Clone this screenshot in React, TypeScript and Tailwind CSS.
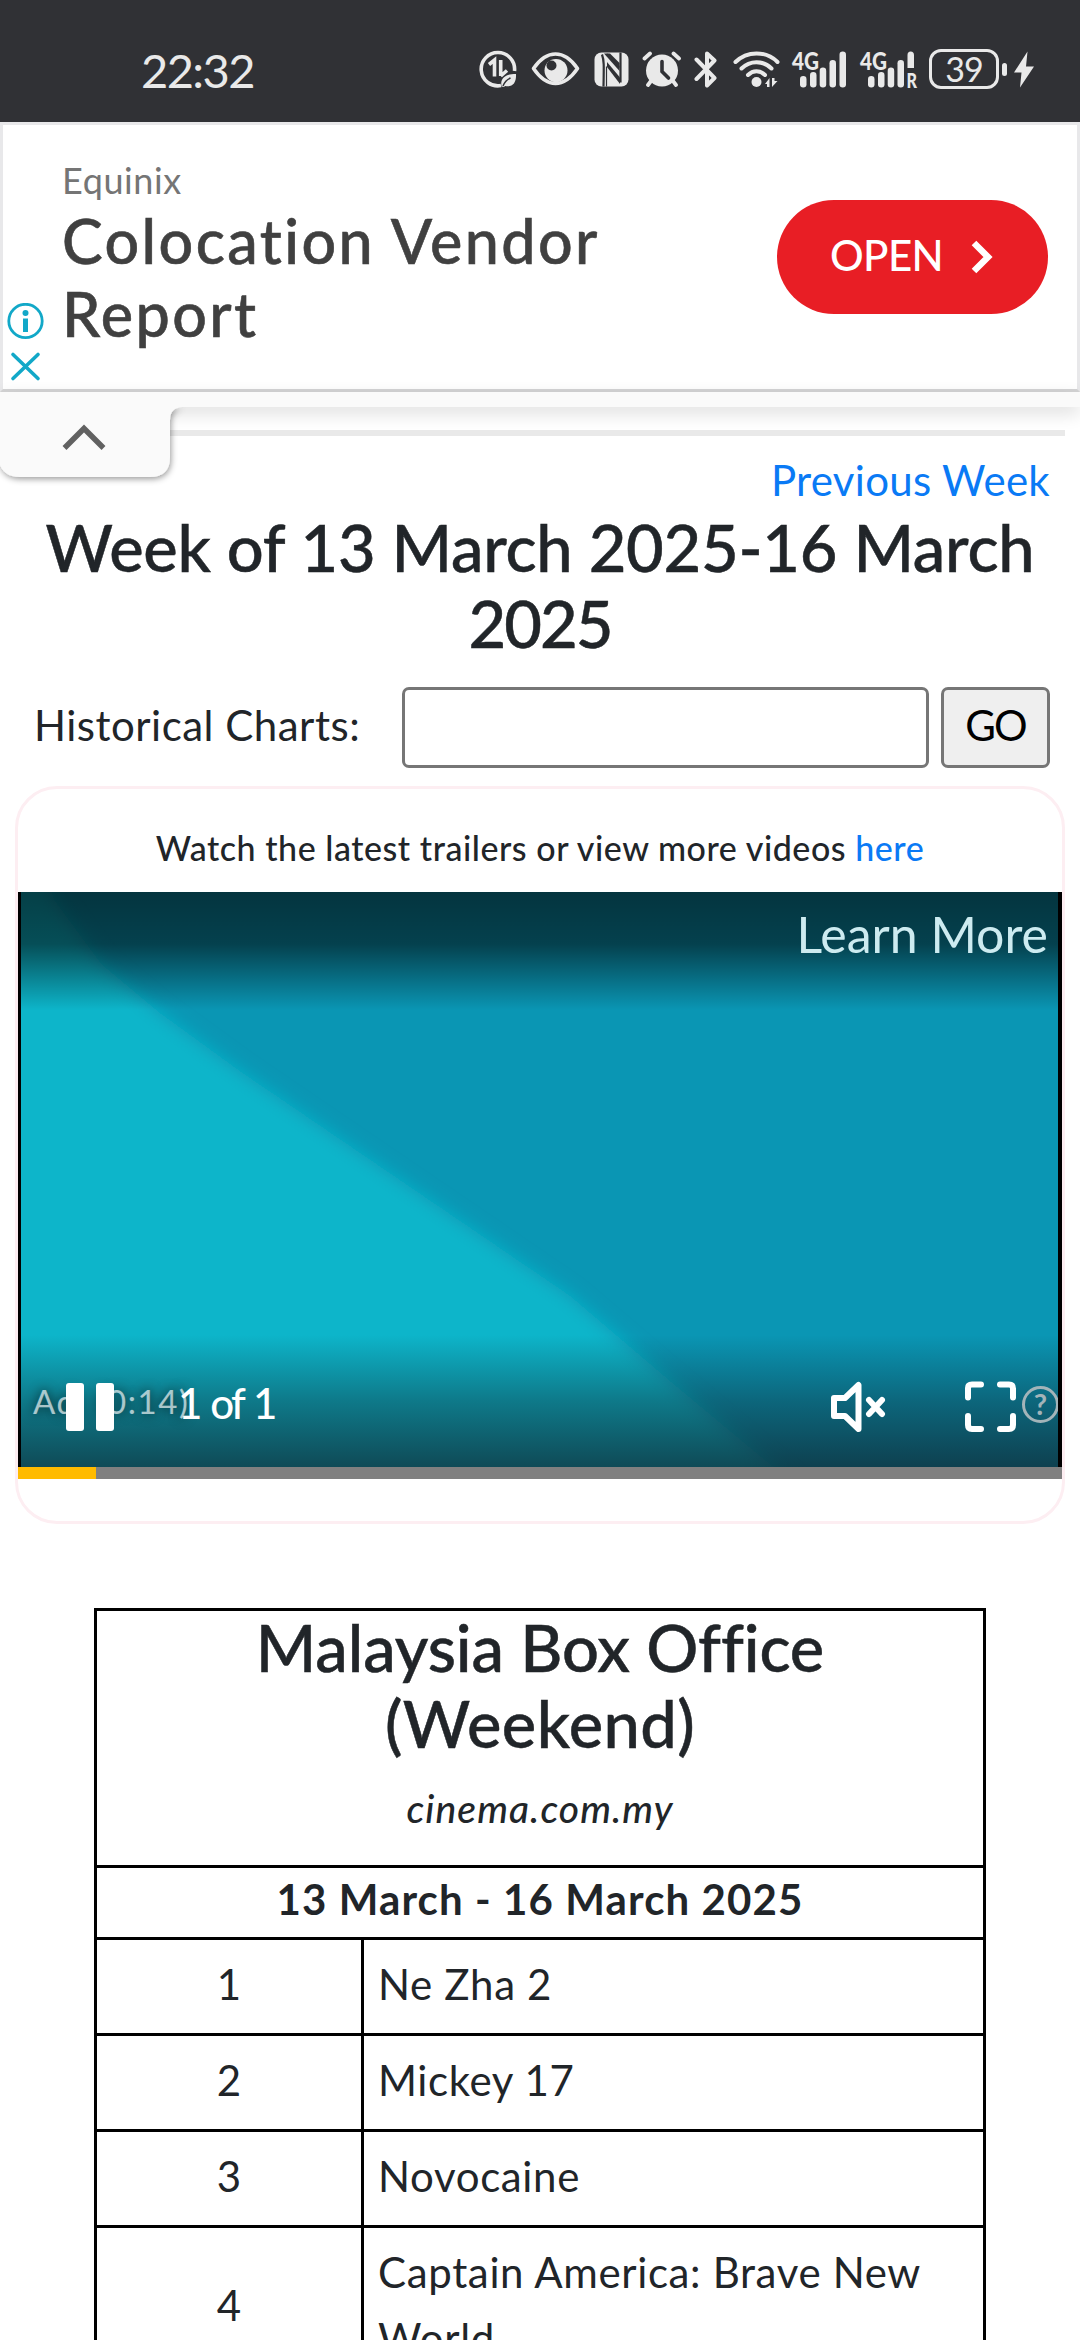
import type { ReactNode } from "react";

const movies = ["Ne Zha 2", "Mickey 17", "Novocaine", "Captain America: Brave New World"];

function DataSaverIcon() {
  return (
    <svg width="38" height="38" viewBox="0 0 38 38" fill="none" className="ml-[479px]">
      <path d="M22 35.6A16.7 16.7 0 1 1 35.5 21" stroke="currentColor" strokeWidth="3.6" />
      <path d="M10 14.5 15.5 10v16.5" stroke="currentColor" strokeWidth="3.6" />
      <path d="M21.7 10v16M21.7 26l6.3-5.5" stroke="currentColor" strokeWidth="3.6" />
      <path
        d="M22.5 36.5c-1.5-8 3.5-12.5 14.5-12.5 .5 9-3.5 13.5-11 12l-1 1z"
        fill="currentColor"
      />
      <path d="M24 36c1.5-4 4-6.5 7.5-8" stroke="#303135" strokeWidth="1.5" />
    </svg>
  );
}

function EyeIcon() {
  return (
    <svg width="49" height="36" viewBox="0 0 49 36" fill="none" className="ml-[14px]">
      <path
        d="M2.5 17.5C9 8 16 3 24.5 3S40 8 46.5 17.5C40 27 33 32.5 24.5 32.5S9 27 2.5 17.5Z"
        stroke="currentColor"
        strokeWidth="3.6"
        strokeLinejoin="round"
      />
      <circle cx="25" cy="19.5" r="11.5" fill="currentColor" />
      <circle cx="20.5" cy="14.5" r="5" fill="#303135" />
    </svg>
  );
}

function NfcIcon() {
  return (
    <svg width="35" height="35" viewBox="0 0 35 35" fill="none" className="ml-[14px]">
      <rect x="0.5" y="0.5" width="34" height="34" rx="7" fill="currentColor" />
      <g stroke="#303135" strokeWidth="2.2">
        <path d="M8 2.500C10 8 10 12 9.500 34.500" />
        <path d="M26.500 0.500v30" />
        <path d="M12.500 14.500v20" strokeWidth="1.2" />
      </g>
      <path d="M10 1.500 25.500 19v-8L16 1.500Z" fill="#303135" />
      <path d="M12.500 1.500 25.500 16v-2L15 2Z" fill="#303135" />
      <path d="M13 15 26 32v-6.500L13 10Z" fill="#303135" />
    </svg>
  );
}

function AlarmIcon() {
  return (
    <svg width="40" height="37" viewBox="0 0 40 37" fill="none" className="ml-[13px]">
      <g stroke="currentColor" strokeWidth="3.8" strokeLinecap="round">
        <path d="M2.5 7.5 8 2.5M37 7.5 31.5 2.5M9 30l-3 4M31 30l3 4" />
      </g>
      <circle cx="20" cy="19.5" r="16" fill="currentColor" />
      <path d="M20 10.5V20.5l6.5 6.5" stroke="#303135" strokeWidth="3.6" strokeLinecap="round" />
    </svg>
  );
}

function BluetoothIcon() {
  return (
    <svg width="25" height="37" viewBox="0 0 25 37" fill="none" className="ml-[12px]">
      <path
        d="M2.5 8.5 20.5 27 13 34.5V2.5L20.5 9.5 2.5 28"
        stroke="currentColor"
        strokeWidth="4"
        strokeLinecap="round"
        strokeLinejoin="round"
      />
    </svg>
  );
}

function WifiIcon() {
  return (
    <svg width="48" height="37" viewBox="0 0 48 37" fill="none" className="ml-[14px]">
      <g stroke="currentColor" strokeWidth="4" strokeLinecap="round">
        <path d="M2.500 11C14-.500 33-.500 44.500 11" />
        <path d="M8.500 17.500c8.500-8.500 21.500-8.500 30 0" />
        <path d="M15 24c5-5 12-5 17 0" />
      </g>
      <circle cx="23.5" cy="31" r="5" fill="currentColor" />
      <path d="M32 33l4.5-6v9h-2.5v-3zM39 27v9l5.5-6H41.5v-3z" fill="currentColor" />
    </svg>
  );
}

function SignalIcon({ roaming }: { roaming?: boolean }) {
  return (
    <svg
      width="57"
      height="37"
      viewBox="0 0 57 37"
      fill="currentColor"
      className="ml-[11px] overflow-visible"
    >
      <text
        x="0"
        y="18.500"
        fontFamily="Lato"
        fontWeight="900"
        fontSize="25"
        textLength="27"
        lengthAdjust="spacingAndGlyphs"
      >
        4G
      </text>
      <rect x="8" y="25" width="6.5" height="11.5" rx="3.2" />
      <rect x="18" y="21" width="6.5" height="15.5" rx="3.2" />
      <rect x="27.7" y="16.5" width="6.5" height="20" rx="3.2" />
      <rect x="37.5" y="9" width="6.5" height="27.5" rx="3.2" />
      {roaming ? (
        <>
          <path d="M47.5 17V4Q47.5.5 50.7.5T54 4v13z" />
          <text
            x="46.500"
            y="36.500"
            fontFamily="Lato"
            fontWeight="900"
            fontSize="20.500"
            textLength="10.500"
            lengthAdjust="spacingAndGlyphs"
          >
            R
          </text>
        </>
      ) : (
        <rect x="47.5" y="0.5" width="6.5" height="36" rx="3.2" />
      )}
    </svg>
  );
}

function StatusBar() {
  return (
    <header className="relative flex h-[122px] items-center bg-[#303135] pt-[16px] text-[#e9e9e9]">
      <span className="absolute top-[41px] left-[141px] text-[47px] leading-[58px] tracking-[-1.6px]">
        22:32
      </span>
      <DataSaverIcon />
      <EyeIcon />
      <NfcIcon />
      <AlarmIcon />
      <BluetoothIcon />
      <WifiIcon />
      <SignalIcon />
      <SignalIcon roaming />
      <div className="ml-[12px] flex h-[40px] w-[70px] items-center justify-center rounded-[12px] border-[3px] border-current text-[34px] leading-[34px] tracking-[-1px]">
        39
      </div>
      <div className="ml-[3px] h-[13px] w-[5px] rounded-full bg-current" />
      <svg width="20" height="37" viewBox="0 0 20 37" fill="currentColor" className="ml-[7px]">
        <path d="M13.5.5 0 21.5h7.5L6 36.5 20 15.5h-8z" />
      </svg>
    </header>
  );
}

function AdBanner() {
  return (
    <section className="relative flex h-[270px] border-[3px] border-[#e8e8ea] border-b-[#d4d4d5] bg-white">
      <div className="flex-1 pt-[33px] pl-[59px]">
        <div className="h-[46px] text-[36px] leading-[44px] tracking-[0.6px] text-[#757575]">
          Equinix
        </div>
        <div className="w-[600px] text-[61px] leading-[73px] font-medium tracking-[2.4px] text-[#404040] [-webkit-text-stroke:0.6px_#404040]">
          Colocation Vendor Report
        </div>
      </div>
      <button
        type="button"
        className="mt-[75px] mr-[29px] flex h-[114px] w-[271px] items-center rounded-full bg-[#e81e25] pl-[53px] text-white"
      >
        <span className="pb-[4px] text-[42px] leading-[50px] font-medium tracking-[-0.6px]">
          OPEN
        </span>
        <svg width="24" height="34" viewBox="0 0 24 34" fill="none" className="ml-[27px]">
          <path d="M4 3 18 17 4 31" stroke="currentColor" strokeWidth="6.5" />
        </svg>
      </button>
      {/* AdChoices */}
      <div className="absolute top-[178px] left-[4px] text-[#12a8c8]">
        <svg width="37" height="37" viewBox="0 0 37 37" fill="none">
          <circle cx="18.5" cy="18" r="16.7" stroke="currentColor" strokeWidth="2.8" />
          <circle cx="18.5" cy="10" r="3" fill="currentColor" />
          <path d="M18.5 15.5v13.5" stroke="currentColor" strokeWidth="5" />
        </svg>
        <svg width="37" height="37" viewBox="0 0 37 37" fill="none" className="mt-[8px]">
          <path
            d="M6 6.5 31 30.5M31 6.5 6 30.5"
            stroke="currentColor"
            strokeWidth="3.6"
            strokeLinecap="round"
          />
        </svg>
      </div>
    </section>
  );
}

function CollapseStrip() {
  return (
    <div className="relative h-[15px] bg-[#fafafa] shadow-[0_6px_18px_rgba(0,0,0,0.14)]">
      <svg width="200" height="95" viewBox="0 0 200 95" fill="none" className="absolute top-0 left-0">
        <defs>
          <filter id="tab-shadow" x="-10%" y="-10%" width="130%" height="130%">
            <feDropShadow dx="1" dy="2" stdDeviation="3" floodColor="#000" floodOpacity="0.4" />
          </filter>
        </defs>
        <path
          d="M0 15H182Q170 16 170 28V65Q170 85 150 85H20Q3 85-1 70V15Z"
          fill="#fafafa"
          filter="url(#tab-shadow)"
        />
        <path d="M0 0H200V15H0Z" fill="#fafafa" />
        <path d="M64.5 56 84 36.5 103.5 56" stroke="#616161" strokeWidth="5.5" />
      </svg>
    </div>
  );
}

function Player() {
  return (
    <div className="relative h-[575px] overflow-hidden border-r-[4px] border-l-[3px] border-black bg-[#0a96b4]">
      <svg
        viewBox="0 0 1037 575"
        preserveAspectRatio="none"
        className="absolute inset-0 h-full w-full"
      >
        <defs>
          <filter id="edge-blur" x="-10%" y="-10%" width="120%" height="120%">
            <feGaussianBlur stdDeviation="9" />
          </filter>
        </defs>
        <path
          d="M-60-60 10-60 33 8 80 72 140 122 217 178 549 404 650 490 770 590 780 640H-60Z"
          fill="#11b5ca"
          filter="url(#edge-blur)"
        />
      </svg>
      <div className="absolute inset-x-0 top-0 h-[118px] bg-[linear-gradient(to_bottom,rgba(0,0,0,0.65),rgba(0,0,0,0.57)_44%,transparent)]" />
      <div className="absolute inset-x-0 bottom-0 h-[132px] bg-[linear-gradient(to_top,rgba(16,24,32,0.68),rgba(16,24,32,0.38)_50%,transparent)]" />

      <div className="absolute top-[5px] right-[10px] text-[50px] leading-[74px] text-[#cdebf0]">
        Learn More
      </div>
      <div className="absolute top-[484px] left-[12px] text-[33px] leading-[50px] tracking-[1.6px] text-white/65 [text-shadow:0_0_12px_rgba(0,0,0,0.8)]">
        Ad: (0:14)
      </div>
      <div className="absolute top-[491px] left-[45px] flex gap-[12px]">
        <div className="h-[48px] w-[18px] rounded-[3px] bg-white" />
        <div className="h-[48px] w-[18px] rounded-[3px] bg-white" />
      </div>
      <div className="absolute top-[486px] left-[157px] text-[42px] leading-[50px] font-medium tracking-[-2.8px] text-white [word-spacing:3px]">
        1 of 1
      </div>
      <svg
        width="56"
        height="54"
        viewBox="0 0 56 54"
        fill="none"
        className="absolute top-[488px] left-[809px] text-white"
      >
        <g stroke="currentColor" strokeWidth="6" strokeLinecap="round" strokeLinejoin="round">
          <path d="M4 18h11L28.5 5v44L15 36H4Z" />
          <path d="M39 20l13 14M52 20 39 34" />
        </g>
      </svg>
      <svg
        width="54"
        height="54"
        viewBox="0 0 54 54"
        fill="none"
        className="absolute top-[488px] left-[943px] text-white"
      >
        <path
          d="M4 17.5V8Q4 4.5 8 4.5h9M36 4.5h9q4 0 4 4v9M49 36v9q0 4-4 4h-9M17 49H8q-4 0-4-4v-9"
          stroke="currentColor"
          strokeWidth="6"
          strokeLinecap="round"
        />
      </svg>
      <div className="absolute top-[494px] right-[-1px] flex h-[37px] w-[37px] items-center justify-center rounded-full border-[3px] border-[#a3b4b9] pb-[1px] text-[29px] leading-[30px] font-bold text-[#a3b4b9]">
        ?
      </div>
    </div>
  );
}

function VideoCard() {
  return (
    <section className="mx-[15px] mt-[18px] h-[738px] rounded-[42px] border-[3px] border-[#fdeef2]">
      <p className="h-[103px] pt-[38px] text-center text-[34px] leading-[42px] font-medium tracking-[0.54px]">
        Watch the latest trailers or view more videos{" "}
        <a className="text-[#0a7af5]">here</a>
      </p>
      <Player />
      <div className="h-[12px] bg-[#808080]">
        <div className="h-full w-[78px] bg-[#ffbb00]" />
      </div>
    </section>
  );
}

function Row({ rank, children }: { rank: number; children: ReactNode }) {
  return (
    <div className="flex border-b-[3px] border-black leading-[66px]">
      <div className="flex w-[267px] shrink-0 items-center justify-center border-r-[3px] border-black pt-[11px] pb-[16px]">
        {rank}
      </div>
      <div className="flex-1 pt-[11px] pr-[40px] pb-[16px] pl-[14px] tracking-[0.65px]">
        {children}
      </div>
    </div>
  );
}

function BoxOfficeTable() {
  return (
    <section className="mt-[84px] ml-[94px] w-[892px] border-[3px] border-black">
      <div className="flow-root h-[257px] border-b-[3px] border-black text-center">
        <h2 className="-mt-[2px] text-[65px] leading-[76px] font-medium tracking-[-0.1px] [-webkit-text-stroke:0.5px_#212529]">
          Malaysia Box Office
          <br />
          <span className="tracking-[0.4px]">(Weekend)</span>
        </h2>
        <p className="mt-[20px] text-[39px] leading-[54px] font-medium tracking-[1.1px] italic">
          cinema.com.my
        </p>
      </div>
      <div className="h-[72px] border-b-[3px] border-black text-center leading-[63px] font-bold tracking-[1.1px]">
        13 March - 16 March 2025
      </div>
      {movies.map((title, i) => (
        <Row key={title} rank={i + 1}>
          {title}
        </Row>
      ))}
    </section>
  );
}

export default function App() {
  return (
    <div className="h-[2340px] w-[1080px] overflow-hidden bg-white font-['Lato',sans-serif] text-[42px] text-[#212529] [font-variant-ligatures:none]">
      <StatusBar />
      <AdBanner />
      <CollapseStrip />

      <div className="mx-[15px] mt-[23px] h-[6px] bg-[#e9e9e9]" />
      <div className="mt-[11px] pr-[30px] text-right leading-[66px] tracking-[0.3px] text-[#0a7af5]">
        Previous Week
      </div>
      <h1 className="-mt-[4px] text-center text-[65px] leading-[76px] font-medium tracking-[-0.25px] [-webkit-text-stroke:0.5px_#212529]">
        Week of 13 March 2025-16 March
        <br />
        <span className="tracking-[-2px]">2025</span>
      </h1>

      <form className="mt-[26px] flex h-[81px] pl-[34px]">
        <label className="w-[368px] pb-[4px] leading-[77px] tracking-[0.5px]">
          Historical Charts:
        </label>
        <input className="w-[527px] rounded-[7px] border-[3px] border-[#767676] bg-white" />
        <button
          type="button"
          className="ml-[12px] w-[109px] rounded-[7px] border-[3px] border-[#767676] bg-[#efefef] pb-[4px] tracking-[-2px] text-black"
        >
          GO
        </button>
      </form>

      <VideoCard />
      <BoxOfficeTable />
    </div>
  );
}
